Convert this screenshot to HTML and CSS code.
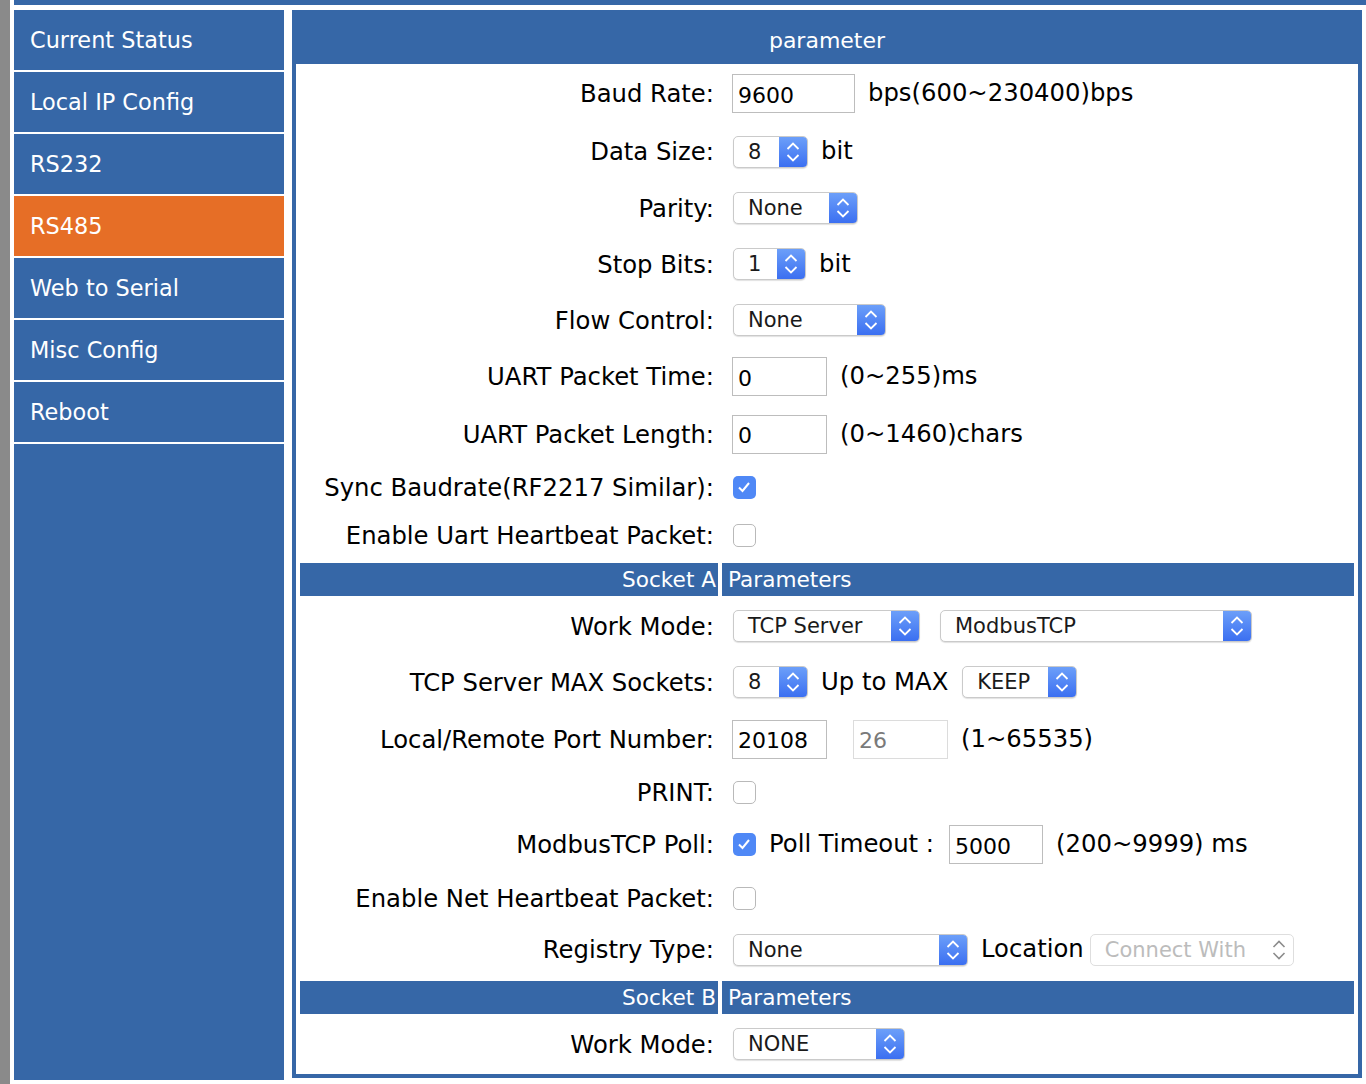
FILE: index.html
```html
<!DOCTYPE html>
<html>
<head>
<meta charset="utf-8">
<title>RS485</title>
<link rel="stylesheet" href="styles.css">
</head>
<body>
<div class="topbar"></div>
<div class="layout">
  <nav class="sidebar">
    <a class="nav-item">Current Status</a>
    <a class="nav-item">Local IP Config</a>
    <a class="nav-item">RS232</a>
    <a class="nav-item active">RS485</a>
    <a class="nav-item">Web to Serial</a>
    <a class="nav-item">Misc Config</a>
    <a class="nav-item">Reboot</a>
  </nav>
  <main class="panel">
    <div class="panel-head">parameter</div>
    <div class="form">
      <div class="row h59">
        <div class="lbl">Baud Rate:</div>
        <div class="val"><span class="inp w123">9600</span><span class="txt">bps(600~230400)bps</span></div>
      </div>
      <div class="row h57">
        <div class="lbl">Data Size:</div>
        <div class="val"><span class="sel w75"><span class="sel-text">8</span><span class="sel-arrow"><svg width="16" height="26" viewBox="0 0 16 26"><path d="M2.5 10 L8 4.5 L13.5 10 M2.5 16 L8 21.5 L13.5 16" fill="none" stroke="#fff" stroke-width="1.8"/></svg></span></span><span class="txt">bit</span></div>
      </div>
      <div class="row h56">
        <div class="lbl">Parity:</div>
        <div class="val"><span class="sel w125"><span class="sel-text">None</span><span class="sel-arrow"><svg width="16" height="26" viewBox="0 0 16 26"><path d="M2.5 10 L8 4.5 L13.5 10 M2.5 16 L8 21.5 L13.5 16" fill="none" stroke="#fff" stroke-width="1.8"/></svg></span></span></div>
      </div>
      <div class="row h56">
        <div class="lbl">Stop Bits:</div>
        <div class="val"><span class="sel w73"><span class="sel-text">1</span><span class="sel-arrow"><svg width="16" height="26" viewBox="0 0 16 26"><path d="M2.5 10 L8 4.5 L13.5 10 M2.5 16 L8 21.5 L13.5 16" fill="none" stroke="#fff" stroke-width="1.8"/></svg></span></span><span class="txt">bit</span></div>
      </div>
      <div class="row h56">
        <div class="lbl">Flow Control:</div>
        <div class="val"><span class="sel w153"><span class="sel-text">None</span><span class="sel-arrow"><svg width="16" height="26" viewBox="0 0 16 26"><path d="M2.5 10 L8 4.5 L13.5 10 M2.5 16 L8 21.5 L13.5 16" fill="none" stroke="#fff" stroke-width="1.8"/></svg></span></span></div>
      </div>
      <div class="row h57">
        <div class="lbl">UART Packet Time:</div>
        <div class="val"><span class="inp w95">0</span><span class="txt">(0~255)ms</span></div>
      </div>
      <div class="row h58">
        <div class="lbl">UART Packet Length:</div>
        <div class="val"><span class="inp w95">0</span><span class="txt">(0~1460)chars</span></div>
      </div>
      <div class="row h49">
        <div class="lbl">Sync Baudrate(RF2217 Similar):</div>
        <div class="val"><span class="chk on"><svg width="22" height="22" viewBox="0 0 22 22"><path d="M6 11.5 L9.5 15 L16 7" fill="none" stroke="#fff" stroke-width="2"/></svg></span></div>
      </div>
      <div class="row h47">
        <div class="lbl">Enable Uart Heartbeat Packet:</div>
        <div class="val"><span class="chk"></span></div>
      </div>

      <div class="sect">
        <div class="sect-l">Socket A</div>
        <div class="sect-r">Parameters</div>
      </div>

      <div class="row h60">
        <div class="lbl">Work Mode:</div>
        <div class="val"><span class="sel w187"><span class="sel-text">TCP Server</span><span class="sel-arrow"><svg width="16" height="26" viewBox="0 0 16 26"><path d="M2.5 10 L8 4.5 L13.5 10 M2.5 16 L8 21.5 L13.5 16" fill="none" stroke="#fff" stroke-width="1.8"/></svg></span></span><span class="sel w312 ml20"><span class="sel-text">ModbusTCP</span><span class="sel-arrow"><svg width="16" height="26" viewBox="0 0 16 26"><path d="M2.5 10 L8 4.5 L13.5 10 M2.5 16 L8 21.5 L13.5 16" fill="none" stroke="#fff" stroke-width="1.8"/></svg></span></span></div>
      </div>
      <div class="row h52">
        <div class="lbl">TCP Server MAX Sockets:</div>
        <div class="val"><span class="sel w75"><span class="sel-text">8</span><span class="sel-arrow"><svg width="16" height="26" viewBox="0 0 16 26"><path d="M2.5 10 L8 4.5 L13.5 10 M2.5 16 L8 21.5 L13.5 16" fill="none" stroke="#fff" stroke-width="1.8"/></svg></span></span><span class="txt">Up to MAX</span><span class="sel w115"><span class="sel-text">KEEP</span><span class="sel-arrow"><svg width="16" height="26" viewBox="0 0 16 26"><path d="M2.5 10 L8 4.5 L13.5 10 M2.5 16 L8 21.5 L13.5 16" fill="none" stroke="#fff" stroke-width="1.8"/></svg></span></span></div>
      </div>
      <div class="row h62">
        <div class="lbl">Local/Remote Port Number:</div>
        <div class="val"><span class="inp w95">20108</span><span class="inp w95 dis ml26">26</span><span class="txt">(1~65535)</span></div>
      </div>
      <div class="row h45">
        <div class="lbl">PRINT:</div>
        <div class="val"><span class="chk"></span></div>
      </div>
      <div class="row h59">
        <div class="lbl">ModbusTCP Poll:</div>
        <div class="val"><span class="chk on"><svg width="22" height="22" viewBox="0 0 22 22"><path d="M6 11.5 L9.5 15 L16 7" fill="none" stroke="#fff" stroke-width="2"/></svg></span><span class="txt">Poll Timeout :</span><span class="inp w94 ml15">5000</span><span class="txt">(200~9999) ms</span></div>
      </div>
      <div class="row h48">
        <div class="lbl">Enable Net Heartbeat Packet:</div>
        <div class="val"><span class="chk"></span></div>
      </div>
      <div class="row h55">
        <div class="lbl">Registry Type:</div>
        <div class="val"><span class="sel w235"><span class="sel-text">None</span><span class="sel-arrow"><svg width="16" height="26" viewBox="0 0 16 26"><path d="M2.5 10 L8 4.5 L13.5 10 M2.5 16 L8 21.5 L13.5 16" fill="none" stroke="#fff" stroke-width="1.8"/></svg></span></span><span class="txt">Location</span><span class="sel w204 sel-dis ml8"><span class="sel-text">Connect With</span><span class="sel-arrow"><svg width="16" height="26" viewBox="0 0 16 26"><path d="M2.5 10 L8 4.5 L13.5 10 M2.5 16 L8 21.5 L13.5 16" fill="none" stroke="#8c8c8c" stroke-width="1.6"/></svg></span></span></div>
      </div>

      <div class="sect">
        <div class="sect-l">Socket B</div>
        <div class="sect-r">Parameters</div>
      </div>

      <div class="row h60">
        <div class="lbl">Work Mode:</div>
        <div class="val"><span class="sel w172"><span class="sel-text">NONE</span><span class="sel-arrow"><svg width="16" height="26" viewBox="0 0 16 26"><path d="M2.5 10 L8 4.5 L13.5 10 M2.5 16 L8 21.5 L13.5 16" fill="none" stroke="#fff" stroke-width="1.8"/></svg></span></span></div>
      </div>
    </div>
  </main>
</div>
</body>
</html>
```

FILE: styles.css
```css
* { box-sizing: border-box; }

html, body {
  margin: 0;
  padding: 0;
}

body {
  background: #ffffff;
  border-left: 10px solid #8a8a8a;
  padding-left: 4px;
  min-height: 1084px;
  font-family: "DejaVu Sans", "Verdana", sans-serif;
  color: #000;
}

.topbar {
  height: 5px;
  background: #3667a7;
  margin-bottom: 5px;
}

.layout {
  display: flex;
  gap: 8px;
  padding-right: 4px;
}

.sidebar {
  width: 270px;
  height: 1070px;
  background: #3667a7;
  display: flex;
  flex-direction: column;
}

.nav-item {
  display: flex;
  align-items: center;
  height: 62px;
  padding-left: 16px;
  border-bottom: 2px solid #ffffff;
  color: #ffffff;
  font-size: 22.4px;
  text-decoration: none;
}

.nav-item.active {
  background: #e66e26;
}

.panel {
  width: 1070px;
  height: 1068px;
  border: 4px solid #3667a7;
  display: flex;
  flex-direction: column;
}

.panel-head {
  height: 50px;
  background: #3667a7;
  color: #ffffff;
  font-size: 22px;
  display: flex;
  align-items: center;
  justify-content: center;
  padding-top: 2px;
}

.form {
  padding: 0 4px;
  display: flex;
  flex-direction: column;
}

.row {
  display: grid;
  grid-template-columns: 418px 1fr;
  column-gap: 4px;
  align-items: center;
  font-size: 24.3px;
}

.h45 { height: 45px; }
.h47 { height: 47px; }
.h48 { height: 48px; }
.h49 { height: 49px; }
.h52 { height: 52px; }
.h55 { height: 55px; }
.h56 { height: 56px; }
.h57 { height: 57px; }
.h58 { height: 58px; }
.h59 { height: 59px; }
.h60 { height: 60px; }
.h62 { height: 62px; }

.lbl {
  text-align: right;
  padding-right: 4px;
  white-space: nowrap;
}

.val {
  display: flex;
  align-items: center;
  gap: 13px;
  padding-left: 10px;
  white-space: nowrap;
}

.txt {
  line-height: 1;
}

.inp {
  display: flex;
  align-items: center;
  height: 39px;
  border: 1px solid #bdbdbd;
  padding-left: 5px;
  padding-top: 3px;
  font-size: 22px;
  background: #fff;
}

.inp.dis {
  border-color: #dcdcdc;
  color: #7a7a7a;
}

.w94 { width: 94px; }
.w95 { width: 95px; }
.w123 { width: 123px; }

.sel {
  display: inline-flex;
  height: 32px;
  margin-left: 1px;
  border: 1px solid #cacaca;
  border-radius: 5px;
  background: #ffffff;
  box-shadow: 0 1px 1px rgba(0, 0, 0, 0.12);
  overflow: hidden;
  font-size: 21px;
}

.sel-text {
  flex: 1;
  display: flex;
  align-items: center;
  padding-left: 14px;
  color: #1a1a1a;
}

.sel-arrow {
  width: 28px;
  flex: none;
  display: flex;
  align-items: center;
  justify-content: center;
  background: linear-gradient(#6c9ff9, #3b6ff1);
}

.sel-dis {
  border-color: #dedede;
  box-shadow: none;
}

.sel-dis .sel-text {
  color: #bcbcbc;
}

.sel-dis .sel-arrow {
  background: none;
}

.w73 { width: 73px; }
.w75 { width: 75px; }
.w115 { width: 115px; }
.w125 { width: 125px; }
.w153 { width: 153px; }
.w172 { width: 172px; }
.w187 { width: 187px; }
.w204 { width: 204px; }
.w235 { width: 235px; }
.w312 { width: 312px; }

.val .ml8 { margin-left: -7px; }
.val .ml15 { margin-left: 2px; }
.val .ml20 { margin-left: 7px; }
.val .ml26 { margin-left: 13px; }

.chk {
  width: 23px;
  height: 23px;
  margin-left: 1px;
  border: 1px solid #b9b9b9;
  border-radius: 5px;
  background: #ffffff;
  display: flex;
}

.chk.on {
  border: none;
  background: #4f88f6;
}

.chk svg {
  display: block;
}

.sect {
  display: grid;
  grid-template-columns: 418px 1fr;
  column-gap: 4px;
  height: 33px;
  margin: 4px 0 0 0;
}

.sect-l,
.sect-r {
  background: #3667a7;
  color: #ffffff;
  font-size: 21.6px;
  display: flex;
  align-items: center;
}

.sect-l {
  justify-content: flex-end;
  padding-right: 2px;
}

.sect-r {
  padding-left: 6px;
}
```
